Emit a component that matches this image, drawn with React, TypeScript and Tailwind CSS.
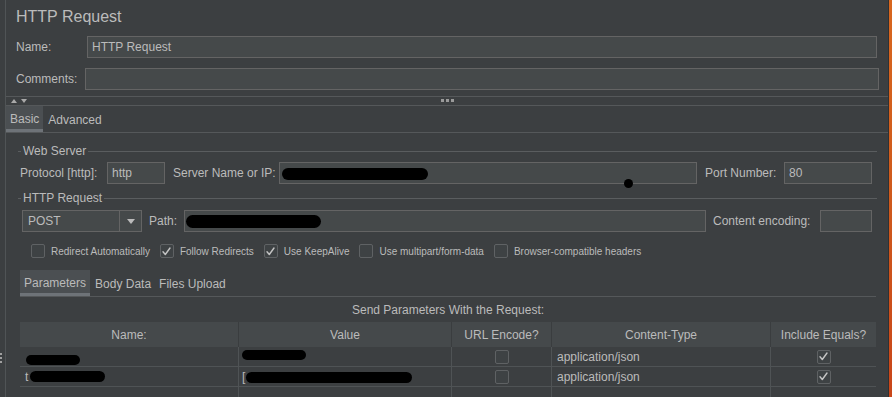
import React from 'react';

const text = 'text-[#bbbbbb]';

function Check({ checked }: { checked?: boolean }) {
  return (
    <span className="flex h-[14px] w-[14px] shrink-0 items-center justify-center rounded-[2px] border border-[#5f6264] bg-[#3e4244]">
      {checked && (
        <svg width="11" height="11" viewBox="0 0 11 11" fill="none">
          <path d="M2 5.8 L4.3 8.5 L9 2" stroke="#c4c4c4" strokeWidth="1.4" strokeLinecap="round" strokeLinejoin="round" />
        </svg>
      )}
    </span>
  );
}

function Blob({ w, h = 12, className = '' }: { w: number; h?: number; className?: string }) {
  return (
    <span
      className={`inline-block shrink-0 rounded-full bg-black ${className}`}
      style={{ width: w, height: h }}
    />
  );
}

function GroupTitle({ label }: { label: string }) {
  return (
    <div className="flex h-[14px] items-center">
      <span className="h-px w-[3px] bg-[#5a5d5f]" />
      <span className="px-[2px] text-[12px] leading-none">{label}</span>
      <span className="h-px flex-1 bg-[#5a5d5f]" />
    </div>
  );
}

function Field({ className = '', children }: { className?: string; children?: React.ReactNode }) {
  return (
    <div
      className={`flex h-[22px] items-center border border-[#646464] bg-[#45494a] px-[4px] text-[12px] ${className}`}
    >
      {children}
    </div>
  );
}

function Header() {
  return (
    <div>
      <div className="h-[36px] pl-[10px] pt-[7px] text-[16px] leading-[20px]">HTTP Request</div>
      <div className="flex h-[22px] items-center pl-[10px] text-[12px]">
        <span className="w-[71px]">Name:</span>
        <Field className="w-[790px]">HTTP Request</Field>
      </div>
      <div className="mt-[10px] flex h-[22px] items-center pl-[10px] text-[12px]">
        <span className="w-[69px]">Comments:</span>
        <Field className="w-[794px]" />
      </div>
      <div className="relative mt-[6px] flex h-[10px] items-center border-y border-[#55585a]">
        <div className="ml-[5px] flex gap-[4px]">
          <svg width="6" height="4" viewBox="0 0 6 4">
            <path d="M0 4 L3 0 L6 4Z" fill="#a9a9a9" />
          </svg>
          <svg width="6" height="4" viewBox="0 0 6 4">
            <path d="M0 0 L6 0 L3 4Z" fill="#a9a9a9" />
          </svg>
        </div>
        <div className="absolute left-[435px] top-[2px] flex gap-[2px]">
          <span className="h-[3px] w-[3px] bg-[#9a9a9a]" />
          <span className="h-[3px] w-[3px] bg-[#9a9a9a]" />
          <span className="h-[3px] w-[3px] bg-[#9a9a9a]" />
        </div>
      </div>
    </div>
  );
}

function Tabs({ items, className = '' }: { items: string[]; className?: string }) {
  return (
    <div className={`flex h-[27px] border-b border-[#55585a] text-[12px] ${className}`}>
      {items.map((t, i) => (
        <div
          key={t}
          className={
            i === 0
              ? 'flex items-center border-b-[3px] border-[#6e7378] bg-[#4b4f52] px-[4px] pt-[2px]'
              : 'ml-[2px] flex items-center px-[3px] pt-[2px]'
          }
        >
          {t}
        </div>
      ))}
    </div>
  );
}

function WebServer() {
  return (
    <div className="ml-[12px] pt-[11px] w-[859px]">
      <GroupTitle label="Web Server" />
      <div className="relative mt-[4px] flex items-center pl-[2px] text-[12px]">
        <span className="w-[87px]">Protocol [http]:</span>
        <Field className="w-[58px]">http</Field>
        <span className="ml-[8px] w-[106px]">Server Name or IP:</span>
        <Field className="w-[418px] pl-[2px]">
          <Blob w={146} h={12} className="mt-[2px]" />
        </Field>
        <span className="ml-[8px] w-[79px]">Port Number:</span>
        <Field className="w-[88px]">80</Field>
        <span className="absolute left-[606px] top-[17px] h-[9px] w-[9px] rounded-full bg-black" />
      </div>
      <div className="mt-[7px]">
        <GroupTitle label="HTTP Request" />
      </div>
      <div className="mt-[5px] flex items-center pl-[4px] pr-[5px] text-[12px]">
        <div className="flex h-[22px] w-[120px] items-center border border-[#646464] bg-[#45494a]">
          <span className="flex-1 pl-[5px]">POST</span>
          <span className="flex h-full w-[22px] items-center justify-center border-l border-[#646464]">
            <svg width="8" height="5" viewBox="0 0 8 5">
              <path d="M0 0 L8 0 L4 5Z" fill="#bbbbbb" />
            </svg>
          </span>
        </div>
        <span className="ml-[7px] w-[35px]">Path:</span>
        <Field className="flex-1 pl-[1px]">
          <Blob w={135} h={13} className="mt-[1px]" />
        </Field>
        <span className="ml-[7px] w-[107px]">Content encoding:</span>
        <Field className="w-[52px]" />
      </div>
      <div className="mt-[12px] flex h-[14px] items-center text-[10px]">
        <div className="ml-[13px] flex items-center gap-[6px]">
          <Check />
          <span>Redirect Automatically</span>
        </div>
        <div className="ml-[10px] flex items-center gap-[6px]">
          <Check checked />
          <span>Follow Redirects</span>
        </div>
        <div className="ml-[10px] flex items-center gap-[6px]">
          <Check checked />
          <span>Use KeepAlive</span>
        </div>
        <div className="ml-[10px] flex items-center gap-[6px]">
          <Check />
          <span>Use multipart/form-data</span>
        </div>
        <div className="ml-[10px] flex items-center gap-[6px]">
          <Check />
          <span>Browser-compatible headers</span>
        </div>
      </div>
    </div>
  );
}

const cols = 'grid grid-cols-[218px_213px_100px_219px_106px]';

function ParamRow({ name, value }: { name: React.ReactNode; value: React.ReactNode }) {
  return (
    <div className={`${cols} h-[20px] border-b border-[#4f5355] text-[12px]`}>
      <div className="flex items-center overflow-hidden pl-[5px]">{name}</div>
      <div className="flex items-center overflow-hidden border-l border-[#4f5355] pl-[3px]">{value}</div>
      <div className="flex items-center justify-center border-l border-[#4f5355]">
        <Check />
      </div>
      <div className="flex items-center border-l border-[#4f5355] pl-[5px]">application/json</div>
      <div className="flex items-center justify-center border-l border-[#4f5355]">
        <Check checked />
      </div>
    </div>
  );
}

function Parameters() {
  return (
    <div className="ml-[14px] pt-[12px] w-[856px]">
      <Tabs items={['Parameters', 'Body Data', 'Files Upload']} />
      <div className="flex h-[25px] items-center justify-center text-[12px]">
        Send Parameters With the Request:
      </div>
      <div className={`${cols} h-[25px] bg-[#45494b] text-[12px]`}>
        <div className="flex items-center justify-center">Name:</div>
        <div className="flex items-center justify-center border-l border-[#3a3d3f]">Value</div>
        <div className="flex items-center justify-center border-l border-[#3a3d3f]">URL Encode?</div>
        <div className="flex items-center justify-center border-l border-[#3a3d3f]">Content-Type</div>
        <div className="flex items-center justify-center border-l border-[#3a3d3f]">Include Equals?</div>
      </div>
      <ParamRow
        name={<Blob w={54} h={10} className="ml-[1px] mt-[7px]" />}
        value={<Blob w={64} h={10} className="mb-[3px]" />}
      />
      <ParamRow
        name={
          <>
            <span>t</span>
            <Blob w={75} h={11} className="ml-[2px]" />
          </>
        }
        value={
          <>
            <span>[</span>
            <Blob w={166} h={11} className="ml-[1px] mt-[2px]" />
          </>
        }
      />
      <div className={`${cols} h-[20px]`}>
        <div />
        <div className="border-l border-[#4f5355]" />
        <div className="border-l border-[#4f5355]" />
        <div className="border-l border-[#4f5355]" />
        <div className="border-l border-[#4f5355]" />
      </div>
    </div>
  );
}

export default function App() {
  return (
    <div
      className={`flex h-[397px] w-[892px] overflow-hidden bg-[#3c3f41] font-['Liberation_Sans',Arial,sans-serif] ${text}`}
    >
      <div className="flex w-[5px] flex-col pt-[353px]">
        <span className="h-[2px] w-[2px] bg-[#a0a0a0]" />
        <span className="mt-[2px] h-[2px] w-[2px] bg-[#a0a0a0]" />
        <span className="mt-[2px] h-[2px] w-[2px] bg-[#a0a0a0]" />
      </div>
      <div className="w-px bg-[#505456]" />
      <div className="w-[882px]">
        <Header />
        <Tabs items={['Basic', 'Advanced']} />
        <WebServer />
        <Parameters />
      </div>
      <div className="w-px bg-[#2f3133]" />
      <div className="w-[3px] bg-gradient-to-b from-[#d8671f] via-[#cf5a1c] to-[#c9461a]" />
    </div>
  );
}
